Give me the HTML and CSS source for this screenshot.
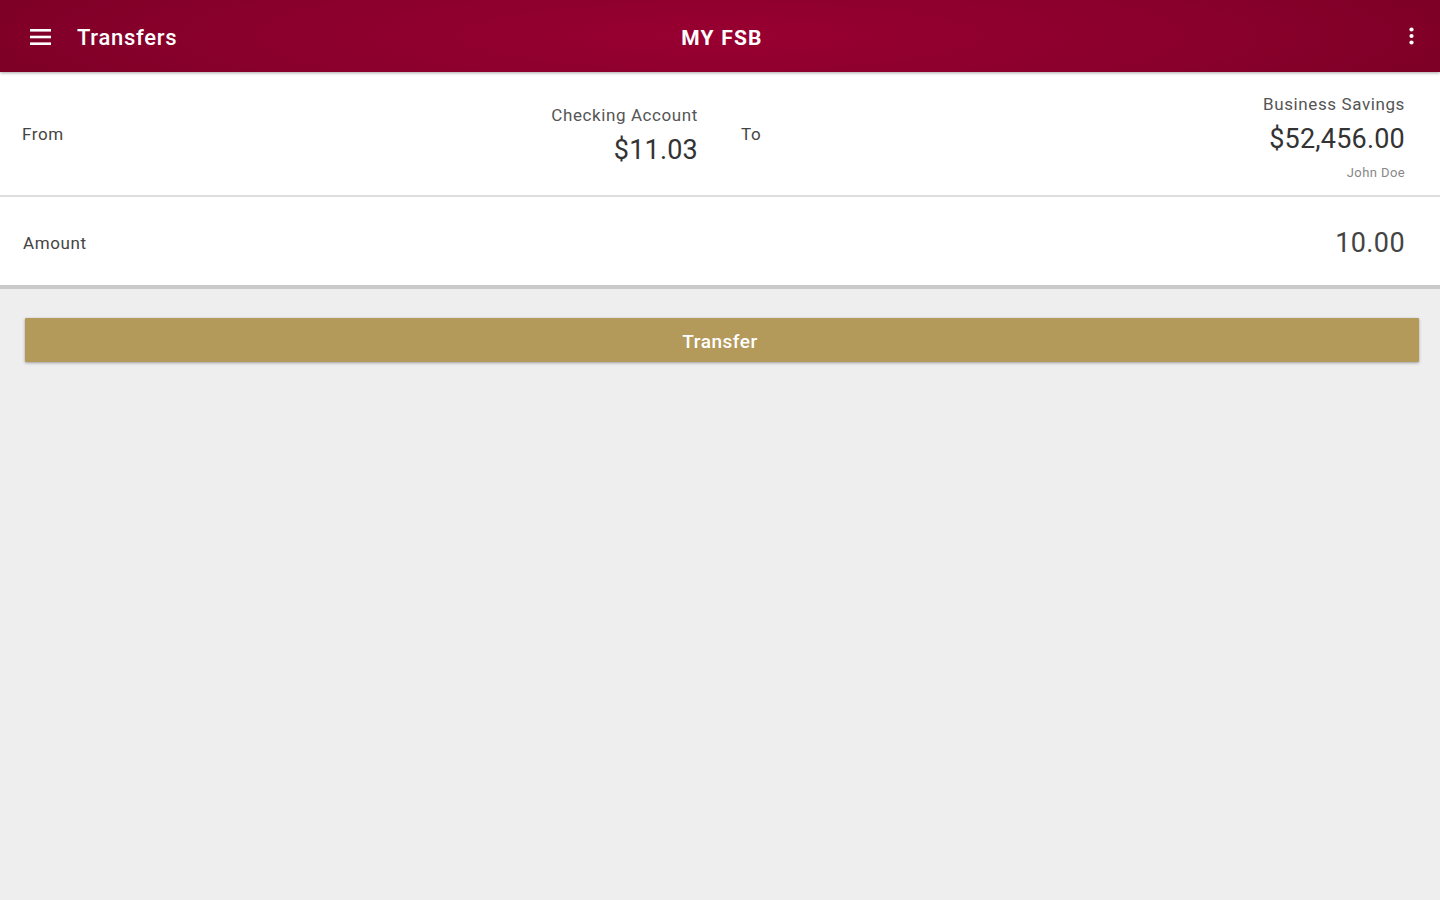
FILE: index.html
```html
<!DOCTYPE html>
<html>
<head>
<meta charset="utf-8">
<link rel="stylesheet" href="styles.css">
</head>
<body>
<header class="appbar">
  <div class="bar-left">
    <svg class="menu" width="21" height="16" viewBox="0 0 21 16"><rect x="0" y="0" width="21" height="2.6" fill="#fff"/><rect x="0" y="6.7" width="21" height="2.6" fill="#fff"/><rect x="0" y="13.4" width="21" height="2.6" fill="#fff"/></svg>
    <span class="bar-title">Transfers</span>
  </div>
  <div class="bar-center">MY FSB</div>
  <div class="bar-right">
    <svg width="5" height="18" viewBox="0 0 5 18"><circle cx="2.5" cy="2.5" r="2.1" fill="#fff"/><circle cx="2.5" cy="9" r="2.1" fill="#fff"/><circle cx="2.5" cy="15.5" r="2.1" fill="#fff"/></svg>
  </div>
</header>
<section class="card">
  <div class="row from-row">
    <div class="from-half">
      <span class="label">From</span>
      <div class="acct acct-from">
        <div class="acct-name">Checking Account</div>
        <div class="acct-amt">$11.03</div>
      </div>
    </div>
    <div class="to-half">
      <span class="label to-label">To</span>
      <div class="acct acct-to">
        <div class="acct-name">Business Savings</div>
        <div class="acct-amt">$52,456.00</div>
        <div class="acct-owner">John Doe</div>
      </div>
    </div>
  </div>
  <div class="row amount-row">
    <span class="label">Amount</span>
    <span class="amount-val">10.00</span>
  </div>
</section>
<div class="actions">
  <button class="btn">Transfer</button>
</div>
</body>
</html>
```
FILE: styles.css
```css
html, body {
  margin: 0;
  padding: 0;
  height: 100%;
}
body {
  background: #eeeeee;
  font-family: Roboto, "Noto Sans", "Liberation Sans", sans-serif;
  color: #333;
}
.appbar {
  height: 72px;
  box-sizing: border-box;
  padding-top: 3px;
  background: radial-gradient(ellipse 60% 160% at 50% 50%, #980031 0%, #8a002c 55%, #790025 100%);
  display: flex;
  align-items: center;
  justify-content: space-between;
  position: relative;
  box-shadow: 0 1px 3px rgba(0,0,0,0.35);
  z-index: 2;
}
.bar-left {
  display: flex;
  align-items: center;
  padding-left: 30px;
  width: 300px;
}
.menu { display: block; margin-top: -2px; }
.bar-title {
  color: #fff;
  font-size: 22px;
  font-weight: 500;
  margin-left: 26px;
  letter-spacing: 0.7px;
}
.bar-center {
  color: #fff;
  font-size: 21px;
  font-weight: 700;
  letter-spacing: 1.2px;
}
.bar-right {
  width: 300px;
  display: flex;
  justify-content: flex-end;
  padding-right: 26px;
}
.bar-right svg { display: block; margin-top: -3px; }
.card {
  background: #fff;
}
.row {
  display: flex;
  align-items: center;
  box-sizing: border-box;
}
.from-row {
  height: 125px;
  border-bottom: 2px solid #dedede;
  padding-top: 1px;
}
.from-half {
  display: flex;
  align-items: center;
  justify-content: space-between;
  width: 698px;
  padding-left: 22px;
  box-sizing: border-box;
}
.to-half {
  flex: 1;
  display: flex;
  align-items: center;
  justify-content: space-between;
  padding-left: 43px;
  padding-right: 35px;
}
.label {
  font-size: 17px;
  color: #444;
  letter-spacing: 0.6px;
}
.acct {
  text-align: right;
  padding-top: 6px;
}
.acct-name {
  font-size: 17px;
  color: #555;
  line-height: 22px;
  letter-spacing: 0.6px;
}
.acct-amt {
  font-size: 27px;
  color: #333;
  line-height: 34px;
  margin-top: 7px;
  letter-spacing: 0.2px;
}
.acct-owner {
  font-size: 13px;
  color: #888;
  line-height: 18px;
  margin-top: 8px;
  letter-spacing: 0.4px;
}
.acct-from { padding-bottom: 4px; }
.amount-row {
  height: 92px;
  border-bottom: 4px solid #c9c9c9;
  justify-content: space-between;
  padding-left: 23px;
  padding-right: 35px;
  padding-top: 3px;
}
.amount-val {
  font-size: 27px;
  color: #444;
  letter-spacing: 0.4px;
}
.actions {
  padding: 29px 21px 0 25px;
}
.btn {
  display: block;
  width: 100%;
  height: 44px;
  background: #b3995a;
  border: none;
  border-radius: 1px;
  color: #fff;
  font-family: Roboto, "Noto Sans", "Liberation Sans", sans-serif;
  font-size: 19px;
  font-weight: 500;
  letter-spacing: 0.5px;
  box-shadow: 0 1px 3px rgba(0,0,0,0.35);
  padding: 2px 4px 0 0;
}
```
